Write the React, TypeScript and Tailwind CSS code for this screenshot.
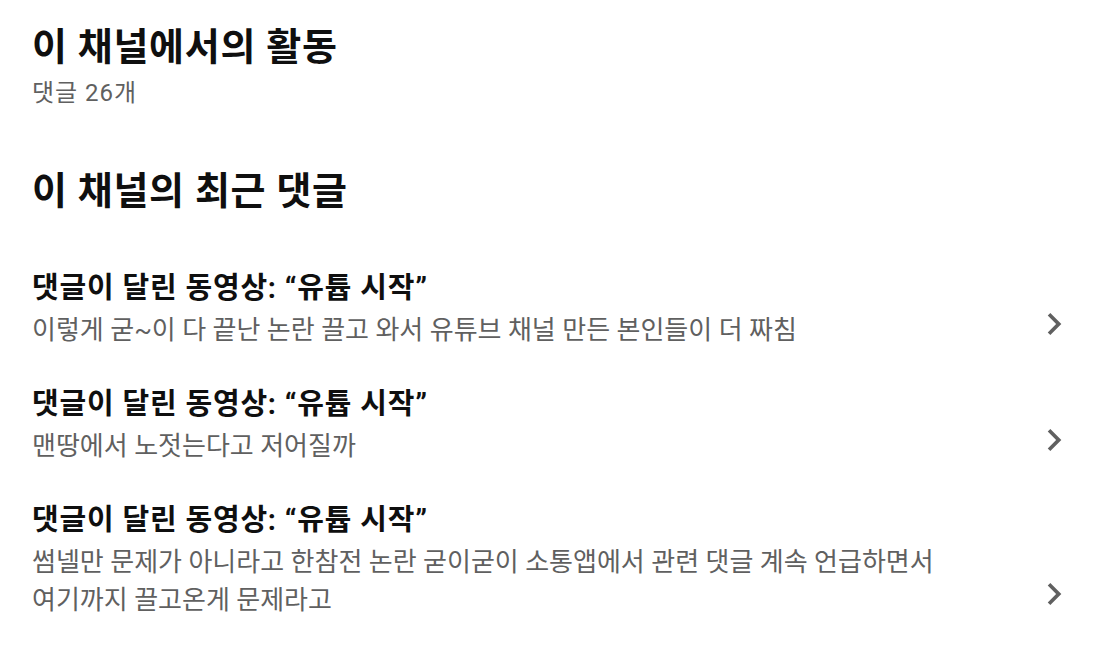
import React from "react";

const items = [
  {
    title: "댓글이 달린 동영상: “유튭 시작”",
    body: ["이렇게 굳~이 다 끝난 논란 끌고 와서 유튜브 채널 만든 본인들이 더 짜침"],
  },
  {
    title: "댓글이 달린 동영상: “유튭 시작”",
    body: ["맨땅에서 노젓는다고 저어질까"],
  },
  {
    title: "댓글이 달린 동영상: “유튭 시작”",
    body: [
      "썸넬만 문제가 아니라고 한참전 논란 굳이굳이 소통앱에서 관련 댓글 계속 언급하면서",
      "여기까지 끌고온게 문제라고",
    ],
  },
];

function Chevron() {
  return (
    <svg width="44" height="44" viewBox="0 0 24 24" fill="#606060">
      <path d="M10 6 8.59 7.41 13.17 12l-4.58 4.59L10 18l6-6z" />
    </svg>
  );
}

export default function App() {
  return (
    <div
      className="w-[1099px] h-[664px] bg-white overflow-hidden text-[#0f0f0f]"
      style={{ fontFamily: '"Roboto", "Noto Sans CJK KR", sans-serif' }}
    >
      <div className="pl-8 pr-[23px]">
        <h1 className="mt-[23px] text-[38px] leading-[48px] font-bold tracking-[0.7px]">이 채널에서의 활동</h1>
        <p className="mt-[7px] text-[24px] leading-[30px] text-[#606060] tracking-[1px]">댓글 26개</p>
        <h2 className="mt-[59px] text-[38px] leading-[48px] font-bold tracking-[0.7px]">이 채널의 최근 댓글</h2>
        <div className="mt-[36px] flex flex-col">
          {items.map((it, i) => (
            <div key={i} className="flex items-end justify-between py-[18px]">
              <div className="flex flex-col">
                <div className="text-[29px] leading-[38px] font-bold tracking-[0.8px]">{it.title}</div>
                <div className="mt-[4px] text-[26px] leading-[38px] text-[#606060]">
                  {it.body.map((l, j) => (
                    <div key={j}>{l}</div>
                  ))}
                </div>
              </div>
              <div className="mb-[3px]">
                <Chevron />
              </div>
            </div>
          ))}
        </div>
      </div>
    </div>
  );
}
